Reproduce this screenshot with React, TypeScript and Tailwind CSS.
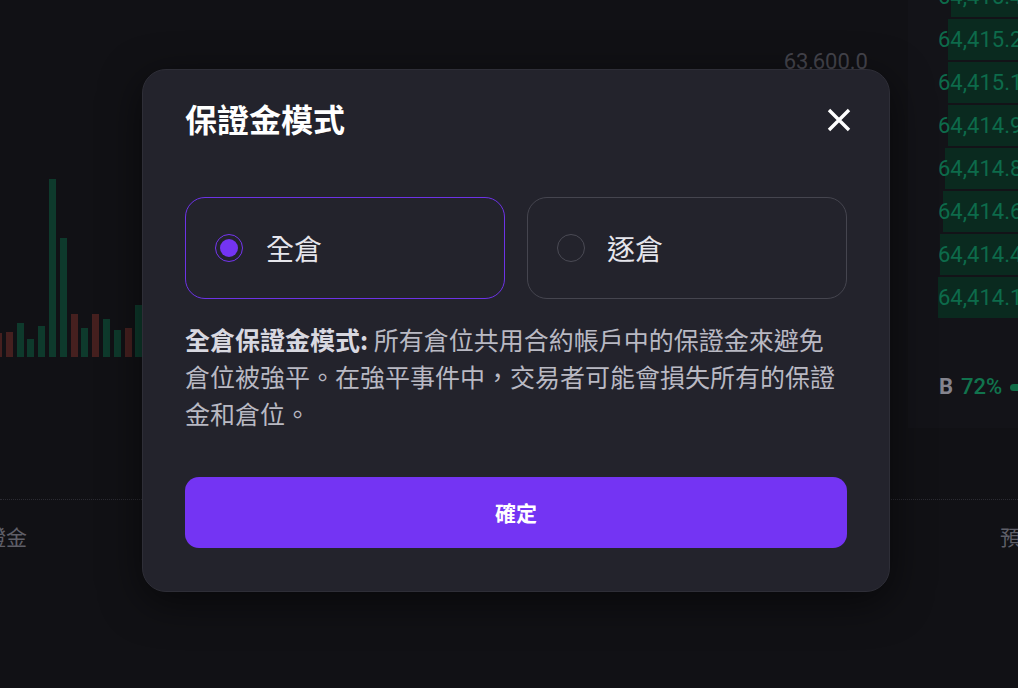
import { useState } from "react";

const bars = [
    { h: 24, up: false },
    { h: 25, up: false },
    { h: 34, up: true },
    { h: 18, up: true },
    { h: 31, up: true },
    { h: 178, up: true },
    { h: 119, up: true },
    { h: 43, up: false },
    { h: 29, up: true },
    { h: 43, up: false },
    { h: 38, up: true },
    { h: 27, up: true },
    { h: 29, up: false },
    { h: 52, up: true },
];

const asks = [
    { price: "64,415.4", depth: 67 },
    { price: "64,415.2", depth: 70 },
    { price: "64,415.1", depth: 70 },
    { price: "64,414.9", depth: 70 },
    { price: "64,414.8", depth: 73 },
    { price: "64,414.6", depth: 75 },
    { price: "64,414.4", depth: 78 },
    { price: "64,414.1", depth: 80 },
];

function Radio({ checked }: { checked: boolean }) {
    if (checked) {
        return (
            <span className="w-[28px] h-[28px] rounded-full border-[1.5px] border-[#7435f0] flex items-center justify-center shrink-0">
                <span className="w-[18px] h-[18px] rounded-full bg-[#7434f3]" />
            </span>
        );
    }
    return <span className="w-[28px] h-[28px] rounded-full border border-[#4a4a54] shrink-0" />;
}

export default function App() {
    const [mode, setMode] = useState<"cross" | "isolated">("cross");

    return (
        <div className="relative w-[1018px] h-[688px] overflow-hidden bg-[#111115] font-['Roboto','Noto_Sans_CJK_TC',sans-serif]">
            {/* trading page behind the dialog */}
            <div className="flex h-[428px]">
                <div className="relative flex-1">
                    <span className="absolute right-[40px] top-[45px] text-[22px] text-[#45454d]">63,600.0</span>
                    <div className="absolute left-[-5px] top-[179px] h-[178px] flex items-end gap-[3.8px]">
                        {bars.map((b, i) => (
                            <div
                                key={i}
                                className={`w-[7px] ${b.up ? "bg-[#0e3a2c]" : "bg-[#45201f]"}`}
                                style={{ height: b.h }}
                            />
                        ))}
                    </div>
                </div>
                <div className="w-[110px] bg-[#131318] flex flex-col overflow-hidden">
                    <div className="-mt-[24px] flex flex-col gap-[2px]">
                        {asks.map((a) => (
                            <div key={a.price} className="relative h-[41px] flex items-center">
                                <div className="absolute right-0 top-0 bottom-0 bg-[#0a2a1f]" style={{ width: a.depth }} />
                                <span className="relative pl-[30px] text-[22px] text-[#0d6b4b] whitespace-nowrap">{a.price}</span>
                            </div>
                        ))}
                    </div>
                    <div className="mt-[57px] pl-[31px] flex items-center gap-[8px] text-[22px] leading-[24px] whitespace-nowrap">
                        <span className="font-bold text-[#84848e]">B</span>
                        <span className="text-[#11734d] font-medium">72%</span>
                        <span className="w-[20px] h-[7px] rounded-full bg-[#0f6b47] shrink-0" />
                    </div>
                </div>
            </div>
            <div className="mt-[71px] border-t border-dotted border-[#2c2c33]" />
            <div className="mt-[26px] flex justify-between text-[21px] leading-[24px] text-[#5f5f68] whitespace-nowrap">
                <span className="-ml-[36px]">保證金</span>
                <span className="w-[18px] overflow-hidden">預估強平價</span>
            </div>

            {/* dialog */}
            <div className="absolute left-[142px] top-[69px] w-[748px] rounded-[24px] bg-[#23232c] border border-[#2e2e37] shadow-[0_10px_40px_rgba(0,0,0,0.55)] px-[42px] pt-[28px] pb-[43px] font-['Noto_Sans_CJK_TC',sans-serif]">
                <div className="flex items-center justify-between h-[40px]">
                    <h2 className="text-[32px] leading-[40px] font-bold text-white">保證金模式</h2>
                    <button className="-mr-[4px] mt-[3px] w-[24px] h-[24px] flex items-center justify-center">
                        <svg width="24" height="24" viewBox="0 0 24 24">
                            <path d="M2 2L22 22M22 2L2 22" stroke="#ffffff" strokeWidth="3.4" />
                        </svg>
                    </button>
                </div>

                <div className="mt-[59px] grid grid-cols-2 gap-[22px]">
                    <button
                        onClick={() => setMode("cross")}
                        className={`h-[102px] rounded-[20px] border flex items-center gap-[23px] pl-[29px] ${mode === "cross" ? "border-[#6d33e6]" : "border-[#45454f]"}`}
                    >
                        <Radio checked={mode === "cross"} />
                        <span className="text-[28px] text-[#e6e6ec]">全倉</span>
                    </button>
                    <button
                        onClick={() => setMode("isolated")}
                        className={`h-[102px] rounded-[20px] border flex items-center gap-[22px] pl-[29px] ${mode === "isolated" ? "border-[#6d33e6]" : "border-[#45454f]"}`}
                    >
                        <Radio checked={mode === "isolated"} />
                        <span className="text-[28px] text-[#e6e6ec]">逐倉</span>
                    </button>
                </div>

                <p className="mt-[22px] text-[25px] leading-[37px] text-[#b9b9c3]">
                    <span className="font-bold text-[#d8d8e0]">全倉保證金模式:</span> 所有倉位共用合約帳戶中的保證金來避免倉位被強平。在強平事件中，交易者可能會損失所有的保證金和倉位。
                </p>

                <button className="mt-[45px] w-full h-[71px] rounded-[14px] bg-[#7434f3] text-white text-[21px] font-bold">
                    確定
                </button>
            </div>
        </div>
    );
}
